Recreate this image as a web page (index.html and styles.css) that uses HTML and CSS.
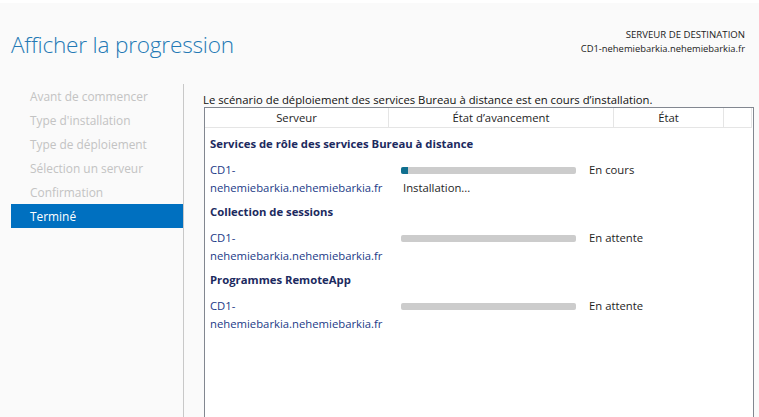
FILE: index.html
```html
<!DOCTYPE html>
<html lang="fr">
<head>
    <meta charset="UTF-8">
    <title>Afficher la progression</title>
    <link rel="stylesheet" href="styles.css">
</head>
<body>
    <div class="wizard">
        <div class="header">
            <h1 class="title">Afficher la progression</h1>
            <div class="dest">
                <div class="dest-label">SERVEUR DE DESTINATION</div>
                <div class="dest-name">CD1-nehemiebarkia.nehemiebarkia.fr</div>
            </div>
        </div>

        <div class="main">
            <ul class="steps">
                <li>Avant de commencer</li>
                <li>Type d'installation</li>
                <li>Type de déploiement</li>
                <li>Sélection un serveur</li>
                <li>Confirmation</li>
                <li class="active">Terminé</li>
            </ul>

            <div class="content">
                <p class="intro">Le scénario de déploiement des services Bureau à distance est en cours d’installation.</p>

                <div class="grid">
                    <div class="grid-head">
                        <div class="col col-server">Serveur</div>
                        <div class="col col-progress">État d’avancement</div>
                        <div class="col col-state">État</div>
                        <div class="col col-pad"></div>
                    </div>

                    <div class="grid-body">
                        <div class="group">
                            <div class="group-title">Services de rôle des services Bureau à distance</div>
                            <div class="row">
                                <div class="server">CD1-<br>nehemiebarkia.nehemiebarkia.fr</div>
                                <div class="progress">
                                    <div class="bar"><div class="fill" style="width: 7px"></div></div>
                                    <div class="step">Installation...</div>
                                </div>
                                <div class="state">En cours</div>
                            </div>
                        </div>

                        <div class="group">
                            <div class="group-title">Collection de sessions</div>
                            <div class="row">
                                <div class="server">CD1-<br>nehemiebarkia.nehemiebarkia.fr</div>
                                <div class="progress">
                                    <div class="bar"></div>
                                </div>
                                <div class="state">En attente</div>
                            </div>
                        </div>

                        <div class="group">
                            <div class="group-title">Programmes RemoteApp</div>
                            <div class="row">
                                <div class="server">CD1-<br>nehemiebarkia.nehemiebarkia.fr</div>
                                <div class="progress">
                                    <div class="bar"></div>
                                </div>
                                <div class="state">En attente</div>
                            </div>
                        </div>
                    </div>
                </div>
            </div>
        </div>
    </div>
</body>
</html>
```

FILE: styles.css
```css
html, body {
    margin: 0;
    padding: 0;
    height: 100%;
}
body {
    font-family: "Open Sans", "Noto Sans", sans-serif;
    font-size: 11.3px;
    color: #1e1e1e;
    background: #fafafa;
    overflow: hidden;
}
.wizard {
    height: 100%;
    display: flex;
    flex-direction: column;
    border-top: 3px solid #ffffff;
    box-sizing: border-box;
}

/* header */
.header {
    height: 81px;
    display: flex;
    justify-content: space-between;
    align-items: flex-start;
    padding: 0 14px 0 11px;
    flex-shrink: 0;
}
.title {
    margin: 26px 0 0;
    font-size: 22.6px;
    font-weight: 300;
    color: #2479b5;
    letter-spacing: -0.2px;
}
.dest {
    margin-top: 25px;
    text-align: right;
    line-height: 14px;
    color: #222;
}
.dest-label {
    font-size: 9.6px;
}
.dest-name {
    font-size: 9.4px;
}

/* left column */
.main {
    flex: 1;
    display: flex;
    min-height: 0;
}
.steps {
    list-style: none;
    margin: 0;
    padding: 0 0 0 11px;
    width: 172px;
    flex-shrink: 0;
    border-right: 1px solid #c8c8c8;
}
.steps li {
    height: 24px;
    line-height: 24px;
    padding-left: 19px;
    color: #c3c3c3;
    font-size: 11.9px;
}
.steps li.active {
    background: #0070c0;
    color: #ffffff;
}

/* right column */
.content {
    flex: 1;
    padding: 9px 5px 0 19px;
    display: flex;
    flex-direction: column;
}
.intro {
    margin: 0;
    line-height: 14px;
    color: #111;
}
.grid {
    flex: 1;
    margin-left: 1px;
    background: #ffffff;
    border: 1px solid #828790;
    border-bottom: none;
}
.grid-head {
    display: flex;
    height: 19px;
    border-bottom: 1px solid #e5e5e5;
    margin-right: 1px;
}
.col {
    text-align: center;
    line-height: 19px;
    border-right: 1px solid #e5e5e5;
}
.col-server { width: 183px; }
.col-progress { width: 224px; }
.col-state { width: 109px; }
.col-pad { width: 27px; }

.grid-body {
    padding: 7px 0 0 5px;
}
.group {
    height: 68px;
}
.group-title {
    font-weight: bold;
    color: #1c2a60;
    line-height: 18px;
}
.row {
    display: flex;
    margin-top: 8px;
    line-height: 18px;
}
.server {
    width: 191px;
    color: #213a87;
}
.progress {
    width: 175px;
}
.bar {
    height: 7px;
    margin-top: 6px;
    background: #cccccc;
    border-radius: 2px;
    overflow: hidden;
}
.fill {
    height: 100%;
    background: #0f6f8f;
}
.step {
    margin-top: 5px;
    padding-left: 2px;
}
.state {
    padding-left: 13px;
}
```
